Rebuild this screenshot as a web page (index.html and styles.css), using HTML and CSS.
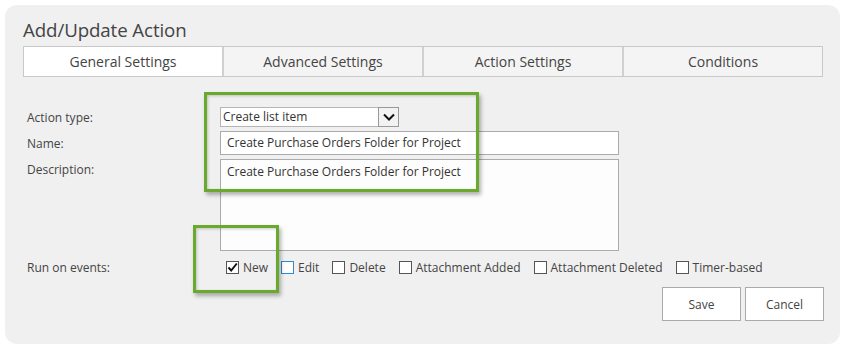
FILE: index.html
```html
<!DOCTYPE html>
<html>
<head>
<meta charset="utf-8">
<link rel="stylesheet" href="styles.css">
</head>
<body>
<div class="panel">
  <h1 class="title">Add/Update Action</h1>
  <div class="tabs">
    <div class="tab active">General Settings</div>
    <div class="tab">Advanced Settings</div>
    <div class="tab">Action Settings</div>
    <div class="tab">Conditions</div>
  </div>
  <div class="form">
    <div class="row row-type">
      <div class="label">Action type:</div>
      <div class="select">
        <span class="select-text">Create list item</span>
        <span class="select-btn"><svg width="12" height="8" viewBox="0 0 12 8"><path d="M1 1.5 L6 6.5 L11 1.5" fill="none" stroke="#111" stroke-width="2"/></svg></span>
      </div>
    </div>
    <div class="row row-name">
      <div class="label">Name:</div>
      <div class="input">Create Purchase Orders Folder for Project</div>
    </div>
    <div class="row row-desc">
      <div class="label">Description:</div>
      <div class="textarea">Create Purchase Orders Folder for Project</div>
    </div>
    <div class="row row-events">
      <div class="label">Run on events:</div>
      <div class="events">
        <label class="cb"><span class="box checked"><svg width="11" height="11" viewBox="0 0 11 11"><path d="M1.5 5.5 L4.2 8.5 L9.8 1.5" fill="none" stroke="#111" stroke-width="2"/></svg></span>New</label>
        <label class="cb"><span class="box focus"></span>Edit</label>
        <label class="cb"><span class="box"></span>Delete</label>
        <label class="cb"><span class="box"></span>Attachment Added</label>
        <label class="cb"><span class="box"></span>Attachment Deleted</label>
        <label class="cb"><span class="box"></span>Timer-based</label>
      </div>
    </div>
    <div class="buttons">
      <button class="btn">Save</button>
      <button class="btn">Cancel</button>
    </div>
  </div>
  <div class="hl hl-fields"></div>
  <div class="hl hl-new"></div>
</div>
</body>
</html>
```
FILE: styles.css
```css
* { box-sizing: border-box; }
html, body { margin: 0; padding: 0; background: #fff; }
body {
  font-family: "Open Sans", "Noto Sans", sans-serif;
  color: #444;
  font-size: 12px;
}
.panel {
  position: relative;
  margin: 5px 0 0 5px;
  width: 835px;
  height: 339px;
  background: #f0f0f0;
  border-radius: 12px;
  padding: 12px 17px 0 18px;
}
.title {
  margin: 0;
  font-weight: normal;
  font-size: 18.7px;
  line-height: 26px;
  color: #444;
  letter-spacing: -0.1px;
}
.tabs {
  display: flex;
  margin-top: 3px;
  height: 31px;
  border: 1px solid #c8c8c8;
  width: 800px;
}
.tab {
  flex: 1;
  text-align: center;
  font-size: 14px;
  line-height: 29px;
  background: #f4f4f4;
  border-left: 2px solid #d0d0d0;
  color: #444;
}
.tab:first-child { border-left: none; }
.tab.active { background: #fff; }

.form { padding-left: 4px; margin-top: 30px; }
.row { display: flex; align-items: flex-start; }
.label { width: 193px; flex: none; font-size: 12px; color: #444; }
.row-type { height: 20px; align-items: center; }
.row-name { margin-top: 4px; height: 24px; align-items: center; }
.row-desc { margin-top: 4px; }
.row-desc .label { padding-top: 2px; }
.select {
  display: flex;
  width: 179px;
  height: 20px;
  background: #fff;
  border: 1px solid #b5b5b5;
}
.select-text { flex: 1; font-size: 12px; line-height: 18px; padding-left: 2px; color: #333; }
.select-btn {
  width: 21px;
  height: 20px;
  margin: -1px -1px 0 0;
  border: 1px solid #999;
  background: #f2f2f2;
  display: flex;
  align-items: center;
  justify-content: center;
}
.input {
  width: 399px;
  height: 24px;
  border: 1px solid #ababab;
  background: #fff;
  font-size: 12px;
  line-height: 22px;
  padding-left: 6px;
  color: #333;
}
.textarea {
  width: 399px;
  height: 92px;
  border: 1px solid #ababab;
  background: #fdfdfd;
  font-size: 12px;
  padding: 3px 6px;
  line-height: 18px;
  color: #333;
}
.row-events { margin-top: 7px; height: 18px; align-items: center; }
.events { display: flex; align-items: center; padding-left: 6px; }
.cb { display: flex; align-items: center; font-size: 12px; color: #444; margin-right: 13px; }
.box {
  width: 13px;
  height: 13px;
  border: 1px solid #555;
  background: #fff;
  margin-right: 4px;
  display: flex;
  align-items: center;
  justify-content: center;
}
.box.focus { border-color: #2a8dd4; }
.buttons {
  display: flex;
  justify-content: flex-end;
  gap: 4px;
  margin-top: 11px;
  width: 797px;
}
.btn {
  width: 79px;
  height: 34px;
  border: 1px solid #ababab;
  background: #fff;
  font-family: inherit;
  font-size: 12px;
  color: #444;
  padding: 0;
}
.hl {
  position: absolute;
  border: 3px solid #68a92e;
  box-shadow: 2px 3px 4px rgba(0,0,0,0.3), inset 1px 1px 3px rgba(0,0,0,0.2);
}
.hl-fields { left: 199px; top: 87px; width: 275px; height: 100px; }
.hl-new { left: 188px; top: 220px; width: 86px; height: 68px; }
```
